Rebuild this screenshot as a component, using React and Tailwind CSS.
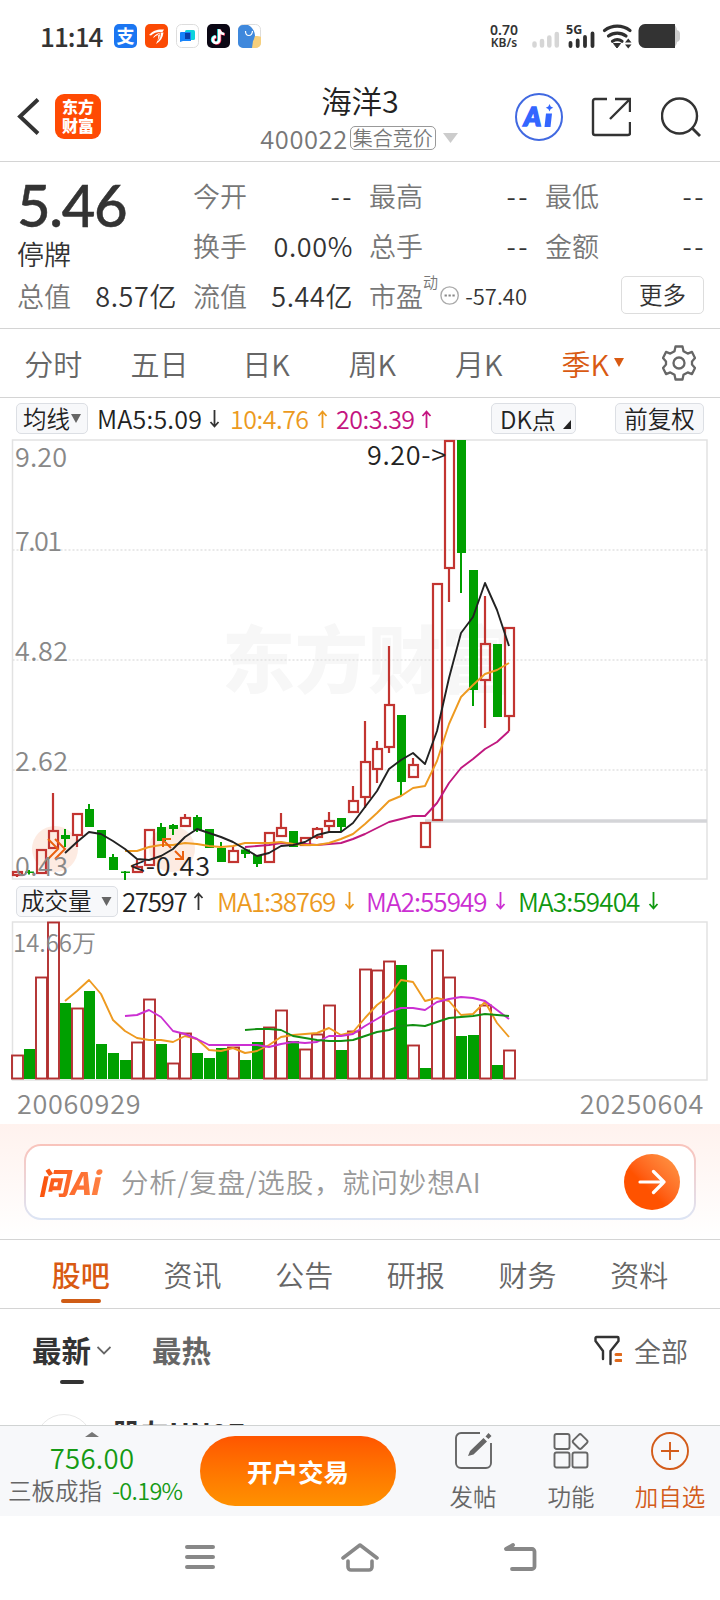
import { clsx } from 'clsx';

const RED = '#c23531';
const GREEN = '#00a000';

const STEP = 12;
const xAt = (i) => 17 + i * STEP;

// [direction, high, body top, body bottom, low]
const CANDLES = [
    ['r', 871, 872, 875, 877], ['g', 870, 871.5, 873, 874.5], ['r', 850, 850, 873, 873], ['r', 793, 831, 848, 848],
    ['g', 829, 835, 839, 847], ['r', 814, 814, 835, 847], ['g', 804, 809, 827, 827], ['g', 830, 830, 858, 858],
    ['g', 854, 857, 870, 870], ['g', 871, 871.5, 873, 880], ['r', 860, 867, 872, 872], ['r', 830, 830, 865, 865],
    ['g', 823, 827, 841, 841], ['g', 824, 825, 829, 835], ['r', 814, 818, 826, 826], ['g', 815, 817, 830, 832],
    ['g', 829, 829, 848, 848], ['g', 842, 848, 862, 862], ['r', 846, 851, 862, 863], ['g', 849, 849.5, 854, 858],
    ['g', 855, 855, 864, 867], ['r', 833, 833, 862, 862], ['r', 813, 828, 836, 836], ['g', 831, 831, 847, 847],
    ['r', 837, 838, 845, 846], ['r', 827, 829, 837, 839], ['r', 812, 821, 826, 832], ['g', 818, 818, 827, 831],
    ['r', 786, 801, 812, 812], ['r', 721, 762, 797, 808], ['r', 741, 749, 769, 783], ['r', 646, 705, 747, 753],
    ['g', 715, 715, 782, 795], ['r', 758, 765, 777, 777], ['r', 823, 823, 847, 847], ['r', 584, 584, 820, 820],
    ['r', 441, 441, 568, 602], ['g', 440, 440, 553, 593], ['g', 570, 570, 690, 706], ['r', 596, 644, 680, 728],
    ['g', 644, 644, 717, 717], ['r', 627, 628, 716, 731],
];

const MA5 = [853, 842, 832, 834, 841, 849, 859, 860, 856, 849, 837, 829, 833, 837, 842, 849, 856, 853, 846, 845, 842, 835, 832, 832, 823, 807, 791, 769, 760, 753, 764, 731, 678, 633, 617, 583, 610, 646];
const MA10 = [851, 851, 847, 845, 845, 843, 844, 846, 847, 846, 843, 843, 843, 842, 844, 845, 845, 843, 839, 834, 824, 813, 801, 796, 788, 786, 761, 724, 697, 685, 674, 670, 663];
const MA20 = [847, 846, 845, 843, 844, 844, 845, 844, 843, 839, 834, 828, 822, 819, 816, 816, 803, 783, 768, 759, 749, 742, 731];

const VOLUMES = [
    ['r', 1055], ['g', 1049], ['r', 977], ['r', 922], ['g', 1003], ['r', 1008], ['g', 991], ['g', 1044], ['g', 1053],
    ['g', 1060], ['r', 1042], ['r', 999], ['g', 1044], ['r', 1063], ['r', 1033], ['g', 1053], ['g', 1058], ['g', 1048],
    ['r', 1047], ['g', 1060], ['g', 1042], ['r', 1027], ['r', 1010], ['g', 1041], ['r', 1049], ['r', 1034], ['r', 1005],
    ['g', 1050], ['r', 1031], ['r', 969], ['r', 970], ['r', 961], ['g', 965], ['r', 1045], ['g', 1068], ['r', 950],
    ['r', 977], ['g', 1036], ['g', 1035], ['r', 1005], ['g', 1065], ['r', 1050],
];

const VMA1 = [1001, 991, 980, 994, 1020, 1031, 1038, 1040, 1040, 1042, 1036, 1039, 1050, 1051, 1048, 1053, 1051, 1045, 1037, 1035, 1034, 1033, 1028, 1035, 1032, 1018, 1005, 996, 980, 982, 1001, 998, 1001, 1015, 1014, 1002, 1023, 1037];
const VMA2 = [1016, 1015, 1010, 1017, 1031, 1034, 1039, 1045, 1045, 1045, 1045, 1045, 1047, 1044, 1042, 1043, 1042, 1036, 1036, 1034, 1026, 1019, 1012, 1008, 1008, 1010, 1002, 999, 997, 998, 1001, 1010, 1019];
const VMA3 = [1030, 1029, 1029, 1030, 1036, 1038, 1040, 1041, 1041, 1040, 1036, 1032, 1030, 1026, 1025, 1026, 1022, 1018, 1017, 1016, 1014, 1015, 1016];

const points = (values) => values.map((y, i) => `${xAt(42 - values.length + i)},${y}`).join(' ');

export default function App() {
    return (
        <div className="w-[720px] h-[1600px] flex flex-col bg-white text-[#333] overflow-hidden whitespace-nowrap font-[350] font-['Noto_Sans_CJK_SC',sans-serif]">
            <StatusBar />
            <Header />
            <Quote />
            <PeriodTabs />
            <AverageRow />
            <PriceChart />
            <VolumeRow />
            <VolumeChart />
            <div className="h-[43px] shrink-0 pl-[17px] pr-[16px] flex items-center justify-between text-[27px] leading-none text-[#888] tracking-[0.7px]">
                <span>20060929</span>
                <span>20250604</span>
            </div>
            <AskBar />
            <ContentTabs />
            <Posts />
            <BottomBar />
            <SystemNav />
        </div>
    );
}

function StatusBar() {
    return (
        <div className="h-[72px] shrink-0 pl-[40px] pr-[40px] flex items-center justify-between">
            <div className="flex items-center gap-2">
                <span className="w-[66px] -mt-[1px] text-[26px] leading-none font-medium tracking-[-0.9px]">11:14</span>
                <span className="w-[23px] h-[24px] rounded-[5px] bg-[#1b76f2] text-white text-[18px] leading-[23px] font-bold text-center">支</span>
                <svg width="23" height="24" viewBox="0 0 23 24">
                    <rect width="23" height="24" rx="5" fill="#fb4a04" />
                    <path d="M4 11C8 6 13 5 19 5.500l-1.500 2.500C13 7.500 9 8.500 6 11.500z" fill="#fff" />
                    <path d="M8 14c2-4 6-5.500 10.500-5.500-.5 5-3 9-7.500 11.500 1.500-3 2.500-5.500 2.200-8.500-2 .5-3.500 1.300-5.200 2.500z" fill="#fff" />
                    <path d="M10 13l6-4M12.500 17c2-2.500 2.800-4.500 3-7" stroke="#fb4a04" strokeWidth=".8" fill="none" />
                </svg>
                <svg width="23" height="24" viewBox="0 0 23 24">
                    <rect x=".5" y=".5" width="22" height="23" rx="5" fill="#fff" stroke="#ddd" />
                    <rect x="9" y="6" width="10" height="10" rx="1.5" fill="#0fd3dc" />
                    <path d="M5 8h9a1 1 0 011 1v8H7l-3 1V9a1 1 0 011-1z" fill="#1784fb" />
                    <rect x="9" y="9" width="5" height="6" fill="#0a3fa8" />
                </svg>
                <svg width="23" height="24" viewBox="0 0 23 24">
                    <rect width="23" height="24" rx="5" fill="#0b0714" />
                    <g fill="none" strokeWidth="2.6">
                        <path d="M11.500 5v10.500a3.200 3.200 0 11-3.400-3.200M11.500 5.500c.6 2.500 2.500 4 5 4.200" stroke="#25f4ee" />
                        <path d="M13 5.800v10.500a3.200 3.200 0 11-3.400-3.200M13 6.300c.6 2.500 2.500 4 5 4.200" stroke="#fe2c55" />
                        <path d="M12.300 5.300v10.500a3.200 3.200 0 11-3.400-3.200M12.300 5.800c.6 2.500 2.500 4 5 4.200" stroke="#fff" />
                    </g>
                </svg>
                <svg width="23" height="24" viewBox="0 0 23 24">
                    <rect x=".5" y=".5" width="22" height="23" rx="5" fill="#fff" stroke="#ddd" />
                    <path d="M14 16l3-4c3 0 5 0 6 1v6a5 5 0 01-5 5h-5z" fill="#f6cf7c" />
                    <path d="M5 1h5c4 2 7 6 7 11-1 2-1 4-2 5l-1 7H5a5 5 0 01-5-5V6a5 5 0 015-5z" fill="#3f88dc" />
                    <path d="M7.500 7c0 6 6.500 6 7 0" fill="none" stroke="#fff" strokeWidth="1.200" />
                </svg>
            </div>
            <div className="flex items-center">
                <div className="w-[32px] mr-[10px] -ml-[1px] text-center font-semibold font-['Noto_Sans',sans-serif]">
                    <div className="text-[14px] leading-[13px]">0.70</div>
                    <div className="text-[12px] leading-[14px]">KB/s</div>
                </div>
                <svg width="150" height="30" viewBox="530 21 150 30">
                    <g stroke="#d6d6d6" strokeWidth="4.500" strokeLinecap="round">
                        <path d="M534.500 43.500v2M542 41v4.500M549.300 37.500v8M556.800 34v11.500" />
                    </g>
                    <g stroke="#2f2f2f" strokeWidth="3.800" strokeLinecap="round">
                        <path d="M570.500 43v3M577.700 40.500v5.500M585 37v9M592.500 33.500v12.500" />
                    </g>
                    <text x="566" y="34" fontSize="12.500" fontWeight="700" fill="#2f2f2f" className="font-['Noto_Sans',sans-serif]">5G</text>
                    <g fill="none" stroke="#2f2f2f" strokeWidth="3.200" strokeLinecap="round">
                        <path d="M604.500 30.500a21 21 0 0125.500 0" />
                        <path d="M608.500 36a14.500 14.500 0 0117.500 0" />
                        <path d="M612.500 41.300a8 8 0 019.500 0" />
                    </g>
                    <path d="M613.500 43.500h7l-3.500 4.500z" fill="#2f2f2f" stroke="#2f2f2f" />
                    <path d="M625 42.500h6.500l-3.250-4zM625 44.500h6.500l-3.250 4z" fill="#2f2f2f" />
                    <path d="M673 30h3a4 4 0 014 3v6a4 4 0 01-4 3h-3z" fill="#ccc" />
                    <rect x="640" y="24" width="37" height="24" rx="6" fill="#ccc" />
                    <path d="M645 24h30v24h-30a6.500 6.500 0 01-6.500-6.500v-11A6.500 6.500 0 01645 24z" fill="#333" />
                </svg>
            </div>
        </div>
    );
}

function Header() {
    return (
        <div className="relative h-[90px] shrink-0 border-b border-[#d4d4d4] pl-[17px] pr-[19px] flex items-center justify-between">
            <div className="flex items-center gap-[15px]">
                <svg width="23" height="37" viewBox="0 0 23 37" fill="none" stroke="#333" strokeWidth="3.900">
                    <path d="M21 1.500L3 18.500l18 17" />
                </svg>
                <div className="w-[46px] h-[45px] rounded-[9px] bg-[#ff4a03] text-white text-[16px] leading-[19px] font-black text-center flex flex-col justify-center pb-[1px]">
                    <span>东方</span>
                    <span>财富</span>
                </div>
            </div>
            <div className="absolute left-0 right-0 top-[12px] flex flex-col items-center pointer-events-none">
                <div className="text-[30.500px] leading-[32px] text-[#222]">海洋3</div>
                <div className="mt-[7px] -ml-[2px] flex items-center text-[25.500px] leading-[30px] text-[#777]">
                    <span className="tracking-[0.6px]">400022</span>
                    <span className="ml-[2px] w-[86px] h-[24px] rounded-[5px] border border-[#999] text-[20px] leading-[21px] text-center">集合竞价</span>
                    <svg className="ml-[7px]" width="15" height="10" viewBox="0 0 15 10"><path d="M0 0h15L7.500 10z" fill="#ccc" /></svg>
                </div>
            </div>
            <div className="flex items-center">
                <svg width="48" height="48" viewBox="0 0 48 48">
                    <circle cx="24" cy="24" r="23" fill="none" stroke="#4169e1" strokeWidth="2" />
                    <text x="9" y="33" fontSize="26" fontWeight="900" fill="#3366ff" stroke="#3366ff" strokeWidth="1.600" fontStyle="italic" className="font-['Lato',sans-serif]">A</text>
                    <path d="M31 20.500h6L35.500 34H29.500zM34.500 11l1.200 2.500 2.500 1.200-2.500 1.200-1.200 2.500-1.200-2.500-2.500-1.200 2.500-1.200z" fill="#3366ff" />
                </svg>
                <svg className="ml-[28px]" width="40" height="40" viewBox="0 0 40 40" fill="none" stroke="#333" strokeWidth="2.400">
                    <path d="M16 2H4a2 2 0 00-2 2v32a2 2 0 002 2h33a2 2 0 002-2V25M24 2h15v13M39 2L19 22" />
                </svg>
                <svg className="ml-[30px]" width="40" height="40" viewBox="0 0 40 40" fill="none" stroke="#333" strokeWidth="2.400">
                    <circle cx="18.500" cy="19" r="17.500" />
                    <path d="M31 31l8 8" strokeWidth="2.800" />
                </svg>
            </div>
        </div>
    );
}

function Cell({ label, value }) {
    return (
        <div className="flex items-center justify-between text-[27px] leading-none">
            <span className="text-[#777]">{label}</span>
            <span className={value === '--' ? 'tracking-[2.500px] -mr-[3px]' : 'tracking-[0.6px] -mr-[2px]'}>{value}</span>
        </div>
    );
}

function Quote() {
    return (
        <div className="h-[167px] shrink-0 border-b border-[#d4d4d4] pt-[9px] px-[17px] grid grid-cols-4 grid-rows-[49px_50px_50px] gap-x-[18px]">
            <div className="row-span-2 flex flex-col">
                <span className="mt-[5px] text-[58px] leading-[58px] font-medium tracking-[-1.300px] font-['Lato',sans-serif] [-webkit-text-stroke:0.500px_#333]">5.46</span>
                <span className="mt-[5px] text-[27px] leading-[30px]">停牌</span>
            </div>
            <Cell label="今开" value="--" />
            <Cell label="最高" value="--" />
            <Cell label="最低" value="--" />
            <Cell label="换手" value="0.00%" />
            <Cell label="总手" value="--" />
            <Cell label="金额" value="--" />
            <Cell label="总值" value="8.57亿" />
            <Cell label="流值" value="5.44亿" />
            <div className="flex items-center text-[27px] leading-none text-[#777]">
                <span>市盈</span>
                <span className="text-[15px] -mt-[28px]">动</span>
                <svg className="ml-[2px]" width="21" height="21" viewBox="0 0 21 21">
                    <circle cx="10.500" cy="10.500" r="9.500" fill="none" stroke="#aaa" strokeWidth="1.500" />
                    <path d="M5 9.500h2.500v2H5zM9.300 9.500h2.500v2H9.300zM13.600 9.500h2.500v2h-2.500z" fill="#888" />
                </svg>
                <span className="ml-[6px] text-[22px] text-[#333]">-57.40</span>
            </div>
            <div className="flex items-center justify-end -mr-[1px]">
                <span className="w-[83px] h-[38px] border border-[#ddd] rounded-[5px] text-[23.500px] leading-[34px] text-center">更多</span>
            </div>
        </div>
    );
}

function PeriodTabs() {
    return (
        <div className="h-[69px] shrink-0 border-b border-[#d4d4d4] flex items-center text-[29px] leading-none text-[#666]">
            {['分时', '五日', '日K', '周K', '月K', '季K'].map(t => (
                <div key={t} className={clsx('relative w-[106.400px] text-center', t === '季K' && 'text-[#d95a12]')}>
                    {t}
                    {t === '季K' && <svg className="absolute left-[82px] top-[9px]" width="10" height="9" viewBox="0 0 10 9"><path d="M0 0h10L5 9z" fill="#d95a12" /></svg>}
                </div>
            ))}
            <svg className="ml-[24px] -mt-[1px]" width="34" height="36" viewBox="0 0 34 36" fill="none" stroke="#666" strokeWidth="2.300" strokeLinejoin="round">
                <path d="M13.500 1.500h7l1 4.700 4.200 2.400 4.300-1.700 3 6.200-3 3.300v3.200l3 3.300-3 6.200-4.300-1.700-4.200 2.400-1 4.700h-7l-1-4.700-4.200-2.400L4 29.100l-3-6.200 3-3.300v-3.200l-3-3.300 3-6.200 4.300 1.700 4.200-2.400z" />
                <circle cx="17" cy="18" r="5.500" />
            </svg>
        </div>
    );
}

function Arrow({ up, className }) {
    return (
        <svg className={className} width="11" height="18" viewBox="0 0 11 18" fill="none" stroke="currentColor" strokeWidth="1.800">
            <path d={up ? 'M5.500 18V2M1.500 6l4-4.500 4 4.500' : 'M5.500 0v16M1.500 12l4 4.500 4-4.500'} />
        </svg>
    );
}

function AverageRow() {
    return (
        <div className="h-[41px] shrink-0 pl-[16px] pr-[16px] flex items-center text-[25px] leading-none">
            <span className="w-[72px] h-[31px] pl-[6px] border border-[#dcdfe4] bg-[#f7f8fa] rounded-[5px] text-[23.500px] flex items-center text-[#222]">
                均线
                <svg className="ml-[1px]" width="10" height="9" viewBox="0 0 10 9"><path d="M0 0h10L5 9z" fill="#666" /></svg>
            </span>
            <div className="w-[112px] ml-[9px] text-[#222] tracking-[0.200px]">MA5:5.09</div>
            <Arrow className="w-[11px]" />
            <div className="w-[87px] ml-[10px] text-[#ec9a1e] tracking-[-0.500px]">10:4.76</div>
            <Arrow up className="text-[#ec9a1e]" />
            <div className="w-[85px] ml-[8px] text-[#c41480] tracking-[-0.500px]">20:3.39</div>
            <Arrow up className="text-[#c41480]" />
            <span className="ml-auto w-[85px] h-[31px] pl-[8px] border border-[#dcdfe4] bg-[#f7f8fa] rounded-[5px] text-[24px] flex items-center text-[#222]">
                DK点
                <svg className="ml-[7px] mt-[12px]" width="8" height="9" viewBox="0 0 8 9"><path d="M8 0v9H0z" fill="#222" /></svg>
            </span>
            <span className="ml-[39px] w-[89px] h-[31px] border border-[#dcdfe4] bg-[#f7f8fa] rounded-[5px] text-[23.500px] flex items-center justify-center text-[#222]">前复权</span>
        </div>
    );
}

function Candle({ i, d }) {
    const [dir, high, top, bottom, low] = d;
    const x = xAt(i);
    if (dir === 'g') {
        return (
            <g fill={GREEN}>
                <rect x={x - 4} y={top} width="9" height={bottom - top} />
                <rect x={x - 1} y={high} width="2" height={low - high} />
            </g>
        );
    }
    return (
        <g fill="none" stroke={RED} strokeWidth="2.200">
            <path d={`M${x} ${high}V${top}M${x} ${bottom}V${low}`} />
            <rect x={x - 4} y={top} width="9" height={bottom - top} />
        </g>
    );
}

function PriceChart() {
    return (
        <svg className="block shrink-0" width="720" height="442" viewBox="0 439 720 442">
            <text x="222" y="687" fontSize="73" fontWeight="900" fill="#f7f7f7">东方财富</text>
            <path d="M12.500 550h695M12.500 660h695M12.500 770h695" stroke="#e2e2e2" strokeWidth="1.500" strokeDasharray="2 2" />
            <rect x="12.500" y="440" width="694.500" height="439" fill="none" stroke="#e2e2e2" strokeWidth="1.500" />
            <path d="M425 821h282" stroke="#d4d5d8" strokeWidth="3.500" />
            <circle cx="55" cy="849" r="23" fill="#fdebe2" />
            <circle cx="172" cy="849" r="23" fill="#fdebe2" />
            {CANDLES.map((d, i) => <Candle key={i} i={i} d={d} />)}
            <g fill="none" strokeWidth="1.900" strokeLinejoin="round">
                <polyline points={points(MA20)} stroke="#c0187f" />
                <polyline points={points(MA10)} stroke="#ee9a20" />
                <polyline points={points(MA5)} stroke="#222" />
            </g>
            <g fill="none" stroke="#ea6010" strokeWidth="2">
                <path d="M48 839l10 10-10 10M55 839l10 10-10 10" />
                <path d="M171 848l-8-8M163 847v-8h8M175 851l8 8M183 851v8h-8" />
            </g>
            <g fontSize="27" fill="#888">
                <text x="15" y="467" textLength="52">9.20</text>
                <text x="15" y="550.500" textLength="47">7.01</text>
                <text x="15" y="660.500" textLength="53">4.82</text>
                <text x="15" y="771" textLength="53">2.62</text>
                <text x="15" y="876" textLength="53">0.43</text>
            </g>
            <g fontSize="27" fill="#222">
                <text x="367" y="465" textLength="79">9.20-&gt;</text>
                <text x="130" y="875.500" textLength="80">&lt;-0.43</text>
            </g>
        </svg>
    );
}

function VolumeRow() {
    return (
        <div className="h-[40px] shrink-0 pl-[16px] flex items-center text-[26px] leading-none">
            <span className="w-[102px] h-[31px] pl-[4px] border border-[#dcdfe4] bg-[#f7f8fa] rounded-[5px] text-[23.500px] flex items-center text-[#222]">
                成交量
                <svg className="ml-[9px]" width="11" height="9" viewBox="0 0 10 9"><path d="M0 0h10L5 9z" fill="#666" /></svg>
            </span>
            <div className="w-[71px] ml-[4px] text-[#222] tracking-[-1.400px]">27597</div>
            <Arrow up />
            <div className="w-[127px] ml-[13px] text-[#ec9a1e] tracking-[-1.250px]">MA1:38769</div>
            <Arrow className="text-[#ec9a1e]" />
            <div className="w-[129px] ml-[11px] text-[#cb2fd2] tracking-[-0.950px]">MA2:55949</div>
            <Arrow className="text-[#cb2fd2]" />
            <div className="w-[130px] ml-[12px] text-[#0f980f] tracking-[-0.850px]">MA3:59404</div>
            <Arrow className="text-[#0f980f]" />
        </div>
    );
}

function VolumeChart() {
    return (
        <svg className="block shrink-0" width="720" height="160" viewBox="0 921 720 160">
            <rect x="12.500" y="922" width="694.500" height="158" fill="none" stroke="#e2e2e2" strokeWidth="1.500" />
            {VOLUMES.map(([dir, top], i) => dir === 'g'
                ? <rect key={i} x={xAt(i) - 5} y={top} width="11" height={1079 - top} fill={GREEN} />
                : <rect key={i} x={xAt(i) - 5} y={top + 0.5} width="11" height={1078 - top} fill="none" stroke="#b23030" strokeWidth="1.900" />)}
            <g fill="none" strokeWidth="1.900" strokeLinejoin="round">
                <polyline points={points(VMA1)} stroke="#ee9a20" />
                <polyline points={points(VMA2)} stroke="#cb2fd2" />
                <polyline points={points(VMA3)} stroke="#128f12" />
            </g>
            <text x="13" y="952" fontSize="24" fill="#888" textLength="83">14.66万</text>
        </svg>
    );
}

function AskBar() {
    return (
        <div className="h-[116px] shrink-0 pt-[20px] px-[24px] border-b border-[#d4d4d4] bg-linear-to-b from-[#fff2ee] to-white">
            <div className="h-[76px] rounded-[17px] p-[2px] bg-linear-to-b from-[#f9c3bb] to-[#dce5f5]">
                <div className="h-full rounded-[15px] bg-white pl-[15px] pr-[14px] flex items-center">
                    <span className="w-[69px] text-[31px] leading-none font-black -skew-x-12 origin-center bg-linear-to-r from-[#fa5207] to-[#ff8648] bg-clip-text text-transparent -mt-[2px]">问Ai</span>
                    <span className="ml-[11px] text-[27.500px] leading-none text-[#999] tracking-[0.800px]">分析/复盘/选股，就问妙想AI</span>
                    <span className="ml-auto w-[56px] h-[56px] rounded-full bg-linear-to-tr from-[#ff5200] from-40% to-[#ff9a48] flex items-center justify-center">
                        <svg width="28" height="26" viewBox="0 0 28 26" fill="none" stroke="#fff" strokeWidth="3.200" strokeLinecap="round" strokeLinejoin="round">
                            <path d="M2 13h24M15.500 2.500L26 13 15.500 23.500" />
                        </svg>
                    </span>
                </div>
            </div>
        </div>
    );
}

function ContentTabs() {
    return (
        <div className="h-[69px] shrink-0 border-b border-[#d4d4d4] px-[25px] grid grid-cols-6 text-[29px] leading-[68px] text-[#666] text-center">
            {['股吧', '资讯', '公告', '研报', '财务', '资料'].map((t, i) => (
                <div key={t} className={clsx('relative', i === 0 && 'text-[#d95a12] font-medium')}>
                    {t}
                    {i === 0 && <span className="absolute left-[36px] bottom-[5px] w-[40px] h-[4px] rounded-full bg-[#cf5c16]" />}
                </div>
            ))}
        </div>
    );
}

function Posts() {
    return (
        <div className="h-[116px] shrink-0 overflow-hidden">
            <div className="h-[82px] pl-[32px] pr-[32px] flex items-center justify-between">
                <div className="relative flex items-center text-[29.500px] leading-none font-bold">
                    <span>最新</span>
                    <svg className="ml-[6px]" width="14" height="9" viewBox="0 0 14 9" fill="none" stroke="#666" strokeWidth="1.800"><path d="M.5 1L7 7.500 13.500 1" /></svg>
                    <span className="ml-[41px] text-[#666]">最热</span>
                    <span className="absolute left-[28px] top-[45px] w-[24px] h-[4px] rounded-full bg-[#333]" />
                </div>
                <div className="flex items-center gap-[12px] text-[27px] leading-none text-[#666]">
                    <svg width="28" height="31" viewBox="0 0 28 31" fill="none" stroke="#333" strokeWidth="2.400" strokeLinecap="round" strokeLinejoin="round">
                        <path d="M9 24v-8L1.500 6V3a1 1 0 011-1h21a1 1 0 011 1v3L16.500 16v13" />
                        <path d="M22 19.500h5M22 25.500h5" stroke="#e06a1c" strokeWidth="3" />
                    </svg>
                    全部
                </div>
            </div>
            <div className="pl-[35px] pt-[23px] flex items-start">
                <span className="w-[58px] h-[58px] shrink-0 rounded-full border border-[#e8e8e8]" />
                <span className="ml-[20px] mt-[2px] text-[27.500px] leading-[32px] font-bold tracking-[0.600px]">股友UN97</span>
            </div>
        </div>
    );
}

function BottomBar() {
    return (
        <div className="relative h-[91px] shrink-0 border-t border-[#d0d3d3] bg-[#f7f8fa] flex items-center text-[#666]">
            <svg className="absolute left-[85px] top-[6px]" width="14" height="5" viewBox="0 0 14 5"><path d="M7 0l7 5H0z" fill="#777" /></svg>
            <div className="w-[191px] pl-[8px] pt-[4px]">
                <div className="w-[168px] text-[27.500px] leading-[34px] text-center text-[#149a14] tracking-[0.300px]">756.00</div>
                <div className="flex items-center text-[23.500px] leading-[32px]">
                    <span>三板成指</span>
                    <span className="ml-[10px] text-[23.500px] text-[#149a14] tracking-[-0.700px]">-0.19%</span>
                </div>
            </div>
            <div className="ml-[9px] w-[196px] h-[70px] rounded-full bg-linear-to-b from-[#ff5500] to-[#ff9100] text-white text-[25.500px] leading-[70px] font-bold text-center">开户交易</div>
            <div className="ml-[27px] w-[100px] pt-[2px] flex flex-col items-center gap-[11px] text-[23.500px] leading-[32px]">
                <svg width="37" height="37" viewBox="0 0 37 37" fill="none" stroke="#666" strokeWidth="1.900">
                    <path d="M25 1H6a5 5 0 00-5 5v25a5 5 0 005 5h25a5 5 0 005-5V11" />
                    <path d="M13 24l2-5L28.500 6l3.500 3.500L18.500 22.500zM30.500 4.500L33.500 1l3 3-3 3z" fill="#666" stroke="none" />
                </svg>
                发帖
            </div>
            <div className="-ml-[2px] w-[100px] pt-[2px] flex flex-col items-center gap-[11px] text-[23.500px] leading-[32px]">
                <svg width="36" height="37" viewBox="0 0 36 37" fill="none" stroke="#666" strokeWidth="1.900">
                    <rect x="1.500" y="2" width="15" height="15" rx="2" />
                    <rect x="1.500" y="20.500" width="15" height="15" rx="2" />
                    <rect x="19.500" y="20.500" width="15" height="15" rx="2" />
                    <rect x="21.400" y="3.800" width="11.500" height="11.500" rx="2" transform="rotate(45 27.150 9.550)" />
                </svg>
                功能
            </div>
            <div className="-ml-[1px] w-[100px] pt-[2px] flex flex-col items-center gap-[10px] text-[23.500px] leading-[32px] text-[#d35c1a]">
                <svg width="38" height="38" viewBox="0 0 38 38" fill="none" stroke="#d35c1a" strokeWidth="1.900">
                    <circle cx="19" cy="19" r="18" />
                    <path d="M10 19h18M19 10v18" />
                </svg>
                加自选
            </div>
        </div>
    );
}

function SystemNav() {
    return (
        <div className="h-[84px] shrink-0 px-[120px] pb-[2px] flex items-center">
            <div className="flex-1 flex justify-center">
                <svg width="30" height="26" viewBox="0 0 30 26" stroke="#888" strokeWidth="4" strokeLinecap="round"><path d="M2 3h26M2 13h26M2 23h26" /></svg>
            </div>
            <div className="flex-1 flex justify-center">
                <svg width="38" height="30" viewBox="0 0 38 30" fill="none" stroke="#888" strokeWidth="3.600" strokeLinecap="round" strokeLinejoin="round">
                    <path d="M2 16L19 3l17 13M7 19v6a3 3 0 003 3h18a3 3 0 003-3v-6" />
                </svg>
            </div>
            <div className="flex-1 flex justify-center">
                <svg width="33" height="30" viewBox="0 0 33 30" fill="none" stroke="#888" strokeWidth="3.800" strokeLinecap="round" strokeLinejoin="round">
                    <path d="M9 3L2 7h26a2.500 2.500 0 012.500 2.500v15A2.500 2.500 0 0128 27H8" />
                </svg>
            </div>
        </div>
    );
}
